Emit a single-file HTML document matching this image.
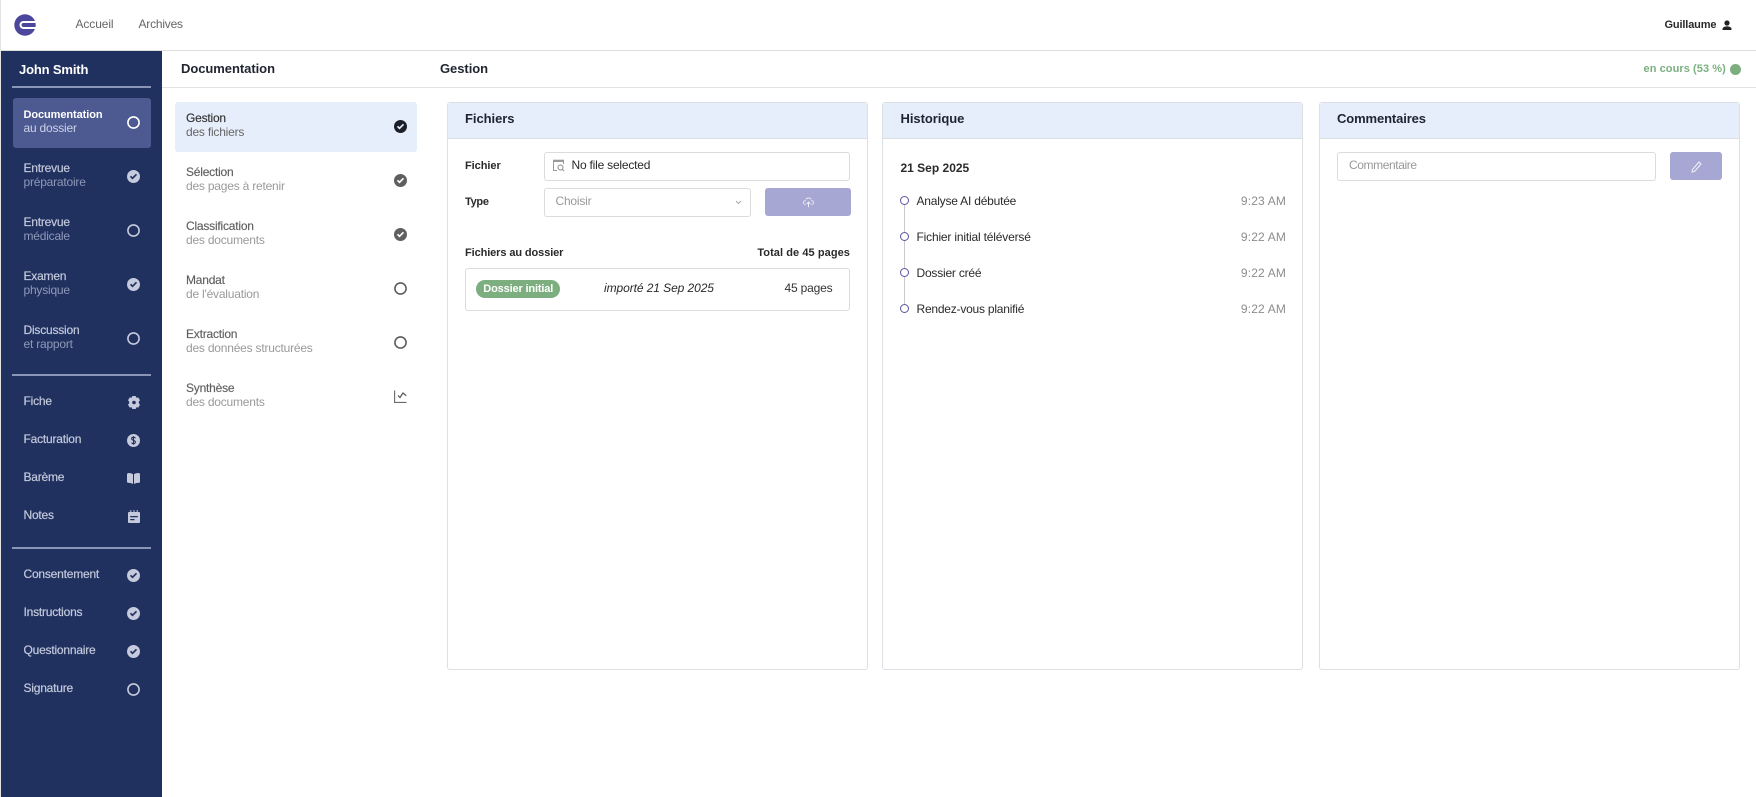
<!DOCTYPE html>
<html lang="fr"><head><meta charset="utf-8"><title>Documentation</title>
<style>
html,body{margin:0;padding:0;width:1756px;height:797px;overflow:hidden;background:#fff;font-family:"Liberation Sans",sans-serif;font-size:12px;color:#222}
.a{position:absolute;box-sizing:border-box}
.t{position:absolute;white-space:nowrap;line-height:16px;height:16px;letter-spacing:-.21px}
.b{font-weight:bold;font-size:11px;letter-spacing:-.05px}
svg{position:absolute;overflow:visible}
.hr{position:absolute;left:12px;width:139px;height:2px;background:#8a95b8}
.n1{color:#c3c9dc;-webkit-text-stroke:.2px #c3c9dc}.n2{color:#8e98b8}
.s1{color:#5f5f5f;-webkit-text-stroke:.15px #5f5f5f}.s2{color:#9a9a9a}
.card{position:absolute;top:102px;height:568px;border:1px solid #dcdfe4;border-radius:3px;box-sizing:border-box}
.card .h{height:35px;background:#e6eefb;border-bottom:1px solid #dcdfe4;border-radius:3px 3px 0 0}
.box{position:absolute;border:1px solid #dcdcdc;border-radius:3px;box-sizing:border-box;background:#fff}
.h3{font-size:13px;font-weight:bold;color:#1f2430;letter-spacing:-.05px}
</style></head><body>
<svg width="0" height="0" style="position:absolute"><defs>
<symbol id="ck" viewBox="0 0 13 13"><path fill-rule="evenodd" d="M6.500 0a6.500 6.500 0 1 0 0 13a6.500 6.500 0 1 0 0-13zM2.900 6.900L4.100 5.700L5.500 7.100L8.900 3.700L10.100 4.900L5.500 9.500z" fill="currentColor"/></symbol>
<symbol id="rg" viewBox="0 0 13 13"><circle cx="6.500" cy="6.500" r="5.600" fill="none" stroke="currentColor" stroke-width="1.600"/></symbol>
</defs></svg>

<!-- top bar -->
<div class="a" style="left:0;top:0;width:1px;height:797px;background:#e4e4e4"></div>
<div class="a" style="left:0;top:50px;width:1756px;height:1px;background:#dedede"></div>
<svg style="left:14px;top:14px" width="22" height="22" viewBox="0 0 22 22"><circle cx="11" cy="11" r="10.700" fill="#4c469c"/><path d="M22 8H9.500A3 3 0 0 0 9.500 14H22" fill="none" stroke="#fff" stroke-width="2"/></svg>
<div class="t" style="left:75.500px;top:16px;color:#666;letter-spacing:-.1px">Accueil</div>
<div class="t" style="left:138.500px;top:16px;color:#666">Archives</div>
<div class="t b" style="left:1664.500px;top:17px;color:#2a2a2a;letter-spacing:-.15px">Guillaume</div>
<svg style="left:1722px;top:20px" width="10" height="11" viewBox="0 0 10 11"><circle cx="5" cy="3" r="2.600" fill="#222"/><path d="M.5 10V9C.5 7.200 3 6.400 5 6.400S9.500 7.200 9.500 9V10z" fill="#222"/></svg>

<!-- sidebar -->
<div class="a" style="left:1px;top:51px;width:161px;height:746px;background:#21315f"></div>
<div class="t h3" style="left:19px;top:62px;color:#fff;letter-spacing:-.15px">John Smith</div>
<div class="hr" style="top:86px"></div>
<div class="a" style="left:13px;top:98px;width:138px;height:50px;background:#4d5a92;border-radius:3px"></div>
<div class="t b" style="left:23.500px;top:107px;color:#fff;letter-spacing:-.08px">Documentation</div>
<div class="t" style="left:23.500px;top:120px;color:#cdd2e3">au dossier</div>
<svg style="left:127px;top:116px;color:#fff" width="13" height="13"><use href="#rg"/></svg>

<div class="t n1" style="left:23.500px;top:160px">Entrevue</div><div class="t n2" style="left:23.500px;top:174px">préparatoire</div>
<svg style="left:127px;top:170px;color:#c5cbdd" width="13" height="13"><use href="#ck"/></svg>
<div class="t n1" style="left:23.500px;top:214px">Entrevue</div><div class="t n2" style="left:23.500px;top:228px">médicale</div>
<svg style="left:127px;top:224px;color:#c5cbdd" width="13" height="13"><use href="#rg"/></svg>
<div class="t n1" style="left:23.500px;top:268px">Examen</div><div class="t n2" style="left:23.500px;top:282px">physique</div>
<svg style="left:127px;top:278px;color:#c5cbdd" width="13" height="13"><use href="#ck"/></svg>
<div class="t n1" style="left:23.500px;top:322px">Discussion</div><div class="t n2" style="left:23.500px;top:336px">et rapport</div>
<svg style="left:127px;top:332px;color:#c5cbdd" width="13" height="13"><use href="#rg"/></svg>

<div class="hr" style="top:374px"></div>
<div class="t n1" style="left:23.500px;top:393px">Fiche</div>
<svg style="left:127.500px;top:395.500px" width="12" height="13" viewBox="0 0 12 13"><path fill-rule="evenodd" d="M4.300 0H7.700L8.300 1.700L10.200 1.400L12 4.300L10.800 5.700V7.300L12 8.700L10.200 11.600L8.300 11.300L7.700 13H4.300L3.700 11.300L1.800 11.600L0 8.700L1.200 7.300V5.700L0 4.300L1.800 1.400L3.700 1.700zM6 4.700a1.800 1.800 0 1 0 0 3.600a1.800 1.800 0 1 0 0-3.600z" fill="#c5cbdd"/></svg>
<div class="t n1" style="left:23.500px;top:431px">Facturation</div>
<svg style="left:127px;top:434px" width="13" height="13" viewBox="0 0 13 13"><circle cx="6.500" cy="6.500" r="6.500" fill="#c5cbdd"/><path d="M8.400 4.300C8 3.500 7.300 3.200 6.500 3.200 5.400 3.200 4.600 3.800 4.600 4.700 4.600 6.500 8.400 6 8.400 8 8.400 9 7.500 9.700 6.500 9.700 5.500 9.700 4.900 9.300 4.500 8.600M6.500 2.200V10.800" fill="none" stroke="#21315f" stroke-width="1.100"/></svg>
<div class="t n1" style="left:23.500px;top:469px">Barème</div>
<svg style="left:127px;top:472.500px" width="13" height="11" viewBox="0 0 13 11"><path d="M0 1.500C0 .5 .8 0 1.500 0 3 0 4.800.4 6 1.200V11C4.800 10.200 3 9.900 1.500 9.900 .7 9.900 0 9.500 0 8.800zM13 1.500C13 .5 12.200 0 11.500 0 10 0 8.200.4 7 1.200V11C8.200 10.200 10 9.900 11.500 9.900 12.300 9.900 13 9.500 13 8.800z" fill="#c5cbdd"/></svg>
<div class="t n1" style="left:23.500px;top:507px">Notes</div>
<svg style="left:127.500px;top:509.500px" width="12" height="13" viewBox="0 0 12 13"><path fill-rule="evenodd" d="M1 2h10a1 1 0 0 1 1 1V12a1 1 0 0 1-1 1H1a1 1 0 0 1-1-1V3a1 1 0 0 1 1-1zM2.200 6V7.300H9.800V6zM2.200 9V10.300H6.500V9z" fill="#c5cbdd"/><path d="M2.800 0v2.500M6 0v2.500M9.200 0v2.500" stroke="#c5cbdd" stroke-width="1"/></svg>

<div class="hr" style="top:547px"></div>
<div class="t n1" style="left:23.500px;top:566px">Consentement</div>
<svg style="left:127px;top:569px;color:#c5cbdd" width="13" height="13"><use href="#ck"/></svg>
<div class="t n1" style="left:23.500px;top:604px">Instructions</div>
<svg style="left:127px;top:607px;color:#c5cbdd" width="13" height="13"><use href="#ck"/></svg>
<div class="t n1" style="left:23.500px;top:642px">Questionnaire</div>
<svg style="left:127px;top:645px;color:#c5cbdd" width="13" height="13"><use href="#ck"/></svg>
<div class="t n1" style="left:23.500px;top:680px">Signature</div>
<svg style="left:127px;top:683px;color:#c5cbdd" width="13" height="13"><use href="#rg"/></svg>

<!-- sub header -->
<div class="a" style="left:162px;top:87px;width:1594px;height:1px;background:#e2e2e2"></div>
<div class="t h3" style="left:181px;top:61px">Documentation</div>
<div class="t h3" style="left:440px;top:61px">Gestion</div>
<div class="t b" style="left:1643.500px;top:61px;color:#7cb080;letter-spacing:.07px">en cours (53 %)</div>
<div class="a" style="left:1730px;top:63.500px;width:11px;height:11px;border-radius:50%;background:#7cae7f"></div>

<!-- step list -->
<div class="a" style="left:175px;top:102px;width:242px;height:50px;background:#e6eefb;border-radius:3px"></div>
<div class="t s1" style="left:186px;top:110px;color:#333;-webkit-text-stroke:.15px #333">Gestion</div><div class="t" style="left:186px;top:124px;color:#666">des fichiers</div>
<svg style="left:394px;top:120px;color:#1c1f28" width="13" height="13"><use href="#ck"/></svg>
<div class="t s1" style="left:186px;top:164px">Sélection</div><div class="t s2" style="left:186px;top:178px">des pages à retenir</div>
<svg style="left:394px;top:174px;color:#5f5f5f" width="13" height="13"><use href="#ck"/></svg>
<div class="t s1" style="left:186px;top:218px">Classification</div><div class="t s2" style="left:186px;top:232px">des documents</div>
<svg style="left:394px;top:228px;color:#5f5f5f" width="13" height="13"><use href="#ck"/></svg>
<div class="t s1" style="left:186px;top:272px">Mandat</div><div class="t s2" style="left:186px;top:286px">de l'évaluation</div>
<svg style="left:394px;top:282px;color:#5f5f5f" width="13" height="13"><use href="#rg"/></svg>
<div class="t s1" style="left:186px;top:326px">Extraction</div><div class="t s2" style="left:186px;top:340px">des données structurées</div>
<svg style="left:394px;top:336px;color:#5f5f5f" width="13" height="13"><use href="#rg"/></svg>
<div class="t s1" style="left:186px;top:380px">Synthèse</div><div class="t s2" style="left:186px;top:394px">des documents</div>
<svg style="left:394px;top:390px" width="13" height="13" viewBox="0 0 13 13"><path d="M.6 .5V12.400H12.500" fill="none" stroke="#6a6a6a" stroke-width="1.100"/><path d="M4 5.500L6 7.500L9 3L12.300 5.700" fill="none" stroke="#5f5f5f" stroke-width="1.300"/></svg>

<!-- cards -->
<div class="card" style="left:447px;width:421px"><div class="h"></div></div>
<div class="card" style="left:882px;width:421px"><div class="h"></div></div>
<div class="card" style="left:1319px;width:421px"><div class="h"></div></div>
<div class="t h3" style="left:465px;top:111px">Fichiers</div>
<div class="t h3" style="left:900.500px;top:111px">Historique</div>
<div class="t h3" style="left:1337px;top:111px;letter-spacing:-.12px">Commentaires</div>

<!-- Fichiers -->
<div class="t b" style="left:465px;top:158px;color:#2a2a2a">Fichier</div>
<div class="box" style="left:544px;top:152px;width:306px;height:29px"></div>
<svg style="left:552px;top:159px" width="13" height="13" viewBox="0 0 13 13"><path d="M1 .7H12V3H1z" fill="#9a9a9a"/><path d="M1.500 3V11.500H5M11.500 3V5" fill="none" stroke="#9a9a9a" stroke-width="1"/><circle cx="8.500" cy="8.500" r="2.500" fill="none" stroke="#8a8a8a" stroke-width="1"/><path d="M10.300 10.300L12 12" stroke="#8a8a8a" stroke-width="1"/></svg>
<div class="t" style="left:571.500px;top:157px;color:#2a2a2a">No file selected</div>
<div class="t b" style="left:465px;top:194px;color:#2a2a2a;letter-spacing:-.3px">Type</div>
<div class="box" style="left:544px;top:188px;width:207px;height:29px"></div>
<div class="t" style="left:555.500px;top:193px;color:#999">Choisir</div>
<svg style="left:735px;top:200px" width="7" height="5" viewBox="0 0 7 5"><path d="M1 1L3.500 3.500L6 1" fill="none" stroke="#aaa" stroke-width="1"/></svg>
<div class="a" style="left:765px;top:188px;width:86px;height:28px;background:#a7a7d3;border-radius:3px"></div>
<svg style="left:802.500px;top:197px;opacity:.85" width="11" height="11" viewBox="0 0 12 12"><path d="M3 8H2.500A2 2 0 0 1 2.500 4C3 2 4.500 1 6 1 8 1 9.300 2.300 9.500 4A2 2 0 0 1 9.500 8H9" fill="none" stroke="#fff" stroke-width=".9" stroke-dasharray="7 1"/><path d="M6 11V5.500M4 7.500L6 5.500L8 7.500" fill="none" stroke="#fff" stroke-width="1"/></svg>
<div class="t b" style="left:465px;top:245px;color:#2a2a2a;letter-spacing:-.1px">Fichiers au dossier</div>
<div class="t b" style="right:906px;top:245px;color:#2a2a2a;letter-spacing:.07px">Total de 45 pages</div>
<div class="box" style="left:465px;top:268px;width:385px;height:43px"></div>
<div class="a" style="left:476px;top:280px;width:84px;height:18px;border-radius:9px;background:#7cae7f"></div>
<div class="t b" style="left:483.300px;top:280.500px;color:#fff;letter-spacing:-.15px">Dossier initial</div>
<div class="t" style="left:604px;top:280px;font-style:italic;color:#2a2a2a;letter-spacing:-.08px">importé 21 Sep 2025</div>
<div class="t" style="right:923.500px;top:280px;color:#333;letter-spacing:-.17px">45 pages</div>

<!-- Historique -->
<div class="t b" style="left:900.500px;top:160px;color:#2a2a2a;font-size:12px;letter-spacing:0">21 Sep 2025</div>
<div class="a" style="left:904px;top:205px;width:1px;height:100px;background:#c9c9cf"></div>
<div class="a" style="left:900px;top:196px;width:9px;height:9px;border:1.300px solid #5a559f;border-radius:50%;background:#fff"></div>
<div class="a" style="left:900px;top:232px;width:9px;height:9px;border:1.300px solid #5a559f;border-radius:50%;background:#fff"></div>
<div class="a" style="left:900px;top:268px;width:9px;height:9px;border:1.300px solid #5a559f;border-radius:50%;background:#fff"></div>
<div class="a" style="left:900px;top:304px;width:9px;height:9px;border:1.300px solid #5a559f;border-radius:50%;background:#fff"></div>
<div class="t" style="left:916.500px;top:193px;color:#2a2a2a">Analyse AI débutée</div>
<div class="t" style="left:916.500px;top:229px;color:#2a2a2a;letter-spacing:-.18px">Fichier initial téléversé</div>
<div class="t" style="left:916.500px;top:265px;color:#2a2a2a">Dossier créé</div>
<div class="t" style="left:916.500px;top:301px;color:#2a2a2a;letter-spacing:-.22px">Rendez-vous planifié</div>
<div class="t" style="right:470px;top:193px;color:#8d8d8d;letter-spacing:.15px">9:23 AM</div>
<div class="t" style="right:470px;top:229px;color:#8d8d8d;letter-spacing:.15px">9:22 AM</div>
<div class="t" style="right:470px;top:265px;color:#8d8d8d;letter-spacing:.15px">9:22 AM</div>
<div class="t" style="right:470px;top:301px;color:#8d8d8d;letter-spacing:.15px">9:22 AM</div>

<!-- Commentaires -->
<div class="box" style="left:1337px;top:152px;width:319px;height:29px"></div>
<div class="t" style="left:1349px;top:157px;color:#999;letter-spacing:-.4px">Commentaire</div>
<div class="a" style="left:1670px;top:152px;width:52px;height:28px;background:#a7a7d3;border-radius:3px"></div>
<svg style="left:1691px;top:160.500px;opacity:.85" width="11" height="12" viewBox="0 0 11 12"><path d="M8 1L10 3L3.500 10.500L1 11L1.500 8.500z" fill="none" stroke="#fff" stroke-width="1"/></svg>
</body></html>
